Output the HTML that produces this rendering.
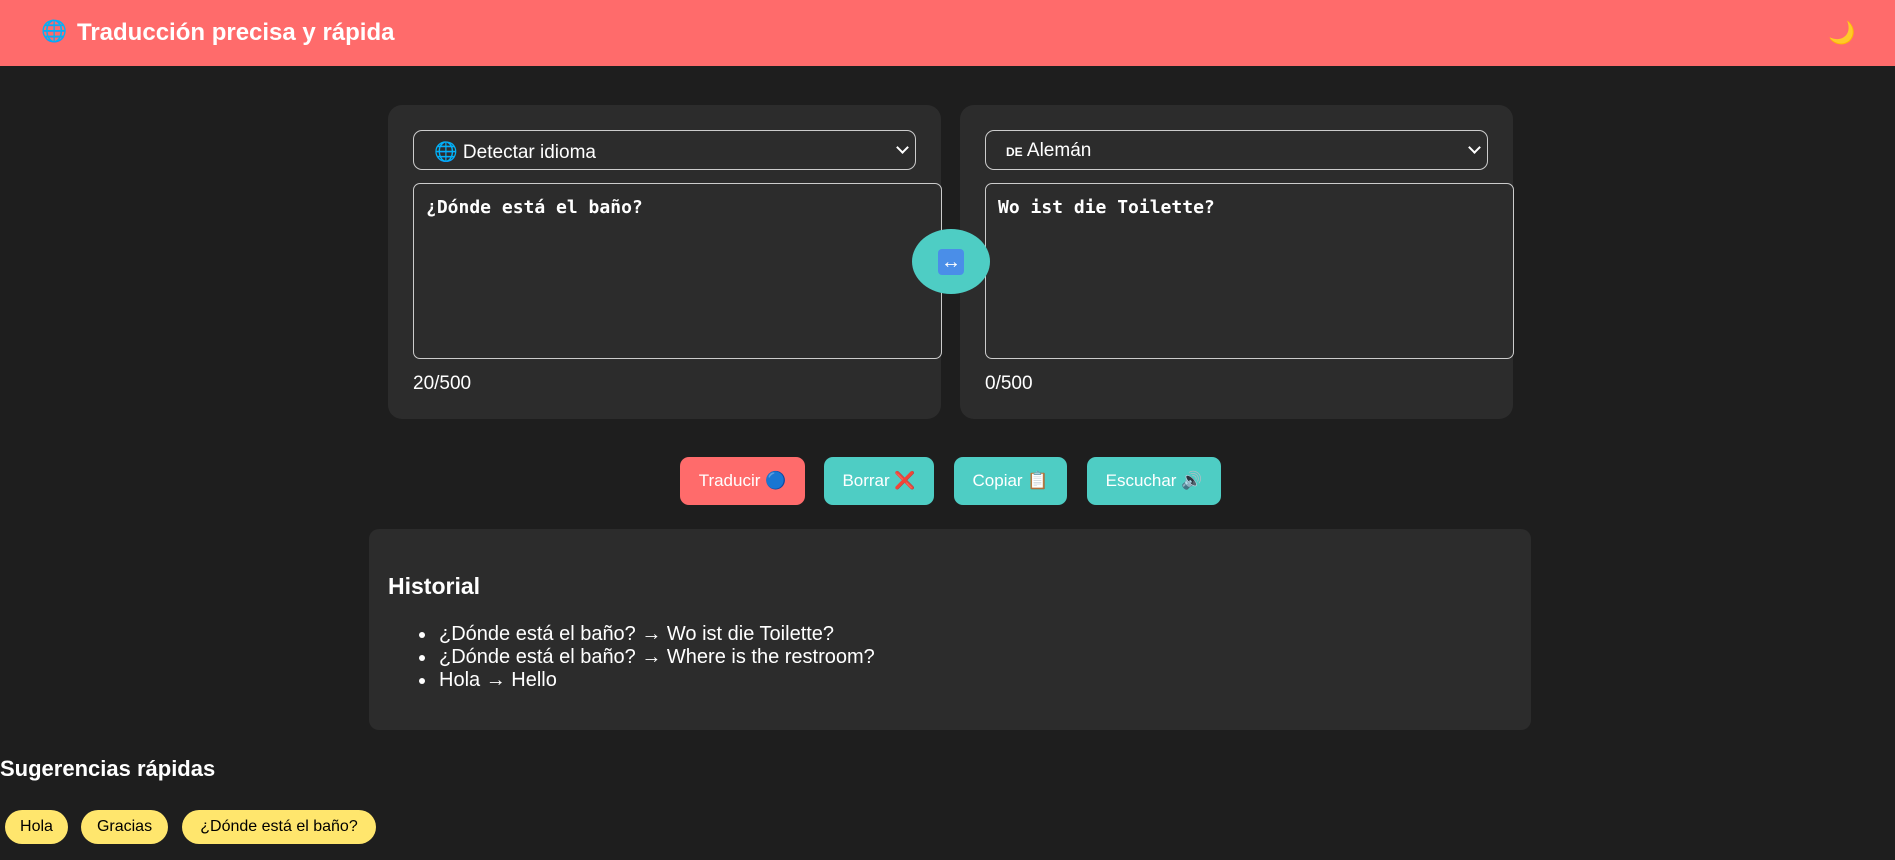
<!DOCTYPE html>
<html><head><meta charset="utf-8"><style>
*{box-sizing:border-box;margin:0;padding:0}
body{width:1895px;height:860px;background:#1e1e1e;font-family:"Liberation Sans",Arial,sans-serif;color:#fff;position:relative;overflow:hidden}
.hdr{position:absolute;left:0;top:0;width:1895px;height:66px;background:#ff6b6b}
.hdr .g{position:absolute;left:41px;top:20px;font-size:21px}
.hdr .t{position:absolute;left:77px;top:19px;font-size:24px;font-weight:bold}
.hdr .m{position:absolute;left:1828px;top:20px;font-size:22px}
.card{position:absolute;background:#2c2c2c;border-radius:14px}
.sel{position:absolute;left:25px;top:25px;width:503px;height:40px;border:1px solid #ccc;border-radius:9px;font-size:19px;padding:9px 20px}
.sel .ch{position:absolute;right:8px;top:12px;width:9px;height:9px;border-right:2px solid #fff;border-bottom:2px solid #fff;transform:rotate(45deg)}
.ta{position:absolute;left:25px;top:78px;width:529px;height:176px;border:1px solid #ccc;border-radius:7px;font-family:"DejaVu Sans Mono","Liberation Mono",monospace;font-size:18px;padding:13px 12px;font-weight:bold}
.cnt{position:absolute;left:25px;top:268px;font-size:19px}
.swap{position:absolute;left:912px;top:229px;width:78px;height:65px;border-radius:50%;background:#4ecdc4}
.swap div{position:absolute;left:26px;top:20px;width:26px;height:26px;background:#4a8ee8;border-radius:4px;color:#fff;font-size:20px;line-height:26px;text-align:center;font-weight:bold}
.btn{position:absolute;top:457px;height:48px;border-radius:9px;background:#4ecdc4;font-size:17px;text-align:center;line-height:48px}
.li{position:absolute;left:439px;font-size:20px}
.li:before{content:"";position:absolute;left:-20px;top:9px;width:6px;height:6px;border-radius:50%;background:#fff}
.chip{position:absolute;top:810px;height:34px;border-radius:17px;background:#ffe66d;color:#000;font-size:16px;line-height:34px;text-align:center}
</style></head><body>
<div class="hdr"><span class="g">🌐</span><span class="t">Traducción precisa y rápida</span><span class="m">🌙</span></div>
<div class="card" style="left:388px;top:105px;width:553px;height:314px">
<div class="sel">🌐 Detectar idioma<span class="ch"></span></div>
<div class="ta">¿Dónde está el baño?</div>
<div class="cnt">20/500</div></div>
<div class="card" style="left:960px;top:105px;width:553px;height:314px">
<div class="sel"><span style="font-size:12px;font-weight:bold">DE</span> Alemán<span class="ch"></span></div>
<div class="ta">Wo ist die Toilette?</div>
<div class="cnt">0/500</div></div>
<div class="swap"><div>↔</div></div>
<div class="btn" style="left:680px;width:125px;background:#ff6b6b">Traducir 🔵</div>
<div class="btn" style="left:824px;width:110px">Borrar ❌</div>
<div class="btn" style="left:954px;width:113px">Copiar 📋</div>
<div class="btn" style="left:1087px;width:134px">Escuchar 🔊</div>
<div class="card" style="left:369px;top:529px;width:1162px;height:201px;border-radius:10px"></div>
<div style="position:absolute;left:388px;top:573px;font-size:23px;font-weight:bold">Historial</div>
<div class="li" style="top:623px">¿Dónde está el baño? → Wo ist die Toilette?</div>
<div class="li" style="top:646px">¿Dónde está el baño? → Where is the restroom?</div>
<div class="li" style="top:669px">Hola → Hello</div>
<div style="position:absolute;left:0;top:756px;font-size:22px;font-weight:bold">Sugerencias rápidas</div>
<div class="chip" style="left:5px;width:63px">Hola</div>
<div class="chip" style="left:81px;width:87px">Gracias</div>
<div class="chip" style="left:182px;width:194px">¿Dónde está el baño?</div>
</body></html>
